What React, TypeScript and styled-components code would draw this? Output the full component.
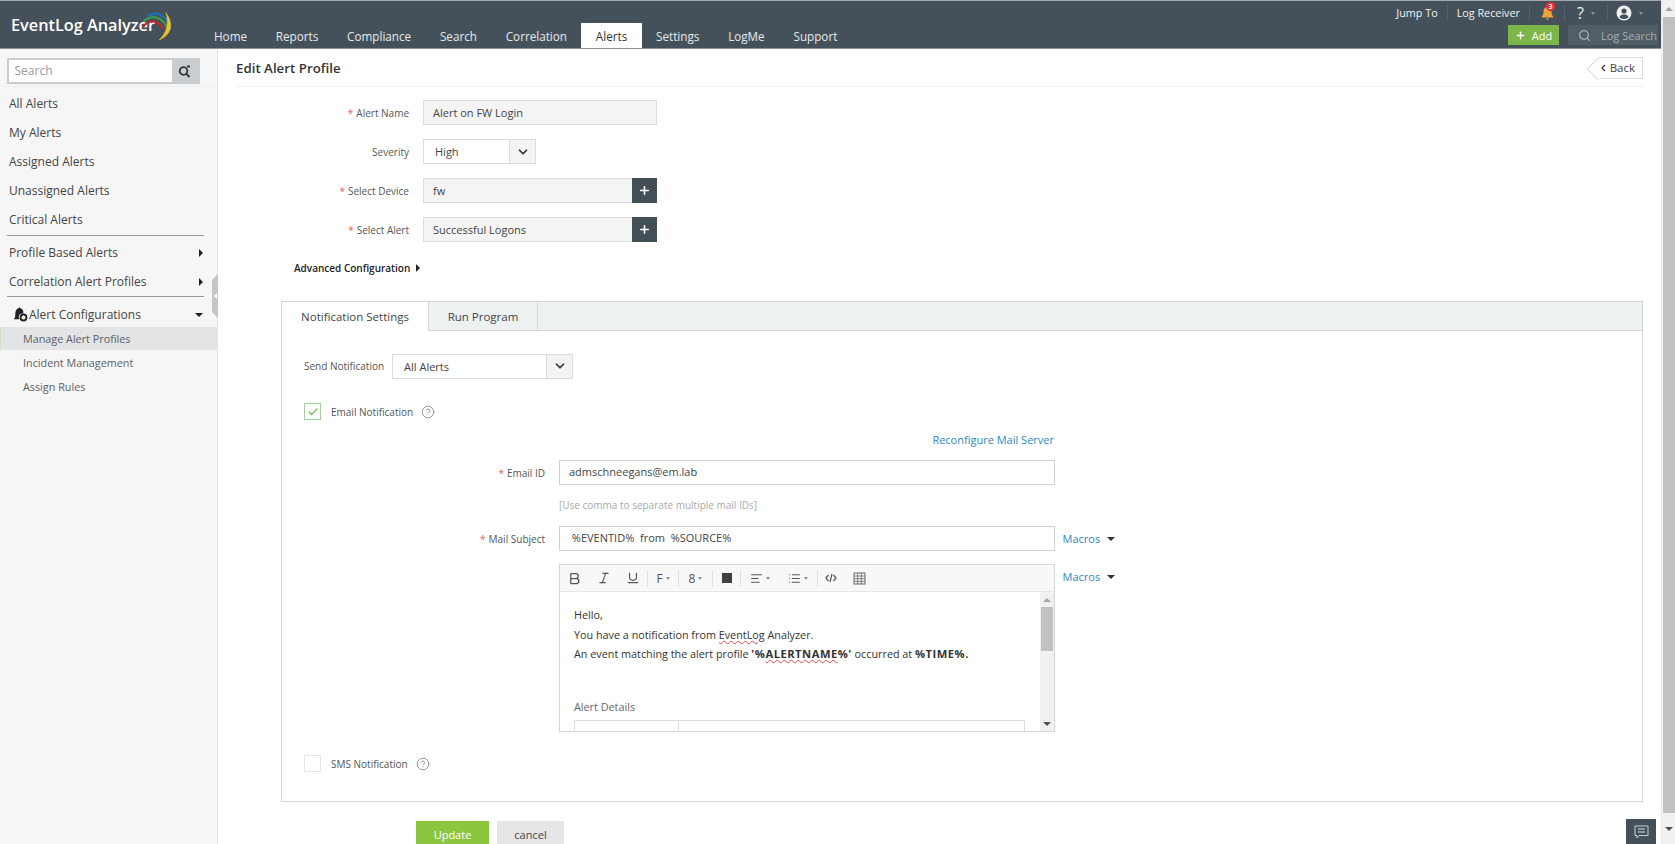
import React from 'react';
import styled, { createGlobalStyle } from 'styled-components';
import { ChevronDown, ChevronLeft, Plus, Check, CircleHelp, Bold, Italic, Underline, AlignLeft, List, Search as SearchIcon } from 'lucide-react';

const Global = createGlobalStyle`
  html, body { margin: 0; height: 844px; overflow: hidden; background: #fff; }
  body { font-family: "Open Sans", "Liberation Sans", sans-serif; color: #444; }
  * { box-sizing: border-box; }
`;

const Page = styled.div`display: flex; width: 1675px; height: 844px; overflow: hidden; position: relative;`;
const Content = styled.div`flex: 1; min-width: 0; display: flex; flex-direction: column;`;

const Scrollbar = styled.aside`width: 14px; background: #f1f1f1; display: flex; flex-direction: column; align-items: center; border-left: 1px solid #e8e8e8;`;
const ScrollArrow = styled.div<{ $up?: boolean; $h: number }>`
  height: ${p => p.$h}px; display: flex; align-items: center; justify-content: center; flex: none;
  &::after { content: ''; border-left: 4px solid transparent; border-right: 4px solid transparent;
    ${p => (p.$up ? 'border-bottom: 4px solid #a5a5a5;' : 'border-top: 4px solid #505050;')} }
`;
const ScrollThumb = styled.div`flex: 1; width: 12px; background: #c1c1c1;`;

const Header = styled.header`
  height: 49px; flex: none; display: flex; background: #45515a;
  border-top: 1px solid #a3a8ab; border-bottom: 1px solid #8b9298;
`;
const Logo = styled.div`
  width: 199.6px; flex: none; position: relative; padding: 12px 0 0 11px;
  font-size: 16.3px; font-weight: 600; line-height: 24px; color: #fff;
`;
const LogoArcs = styled.svg`position: absolute; left: 140px; top: 8px;`;
const Nav = styled.nav`display: flex; align-items: flex-end;`;
const NavItem = styled.a<{ $active?: boolean }>`
  height: 25px; padding: 0 14.4px; display: flex; align-items: center; font-size: 11.7px;
  color: ${p => (p.$active ? '#333' : '#e6e9eb')}; background: ${p => (p.$active ? '#fff' : 'transparent')};
`;
const HeaderRight = styled.div`margin-left: auto; display: flex; flex-direction: column; align-items: flex-end; padding-right: 3px;`;
const TopRow = styled.div`height: 24px; display: flex; align-items: center; padding-right: 8px;`;
const TopLink = styled.span`font-size: 10.8px; color: #f0f2f3; padding: 0 9px; line-height: 16px; border-right: 1px solid #56626a;`;
const IconCell = styled.span<{ $w: number }>`
  width: ${p => p.$w}px; height: 16px; display: flex; align-items: center; justify-content: center; gap: 7px;
  border-right: 1px solid #56626a; color: #eef0f1; font-size: 16px; position: relative;
  &:last-child { border-right: 0; }
`;
const Badge = styled.span`
  position: absolute; top: -3px; left: 16px; width: 9px; height: 9px; border-radius: 50%; background: #ee2a33; color: #fff;
  font-size: 7px; line-height: 9px; text-align: center; font-weight: 700;
`;
const MiniCaret = styled.span`width: 0; height: 0; border-left: 2.5px solid transparent; border-right: 2.5px solid transparent; border-top: 3px solid #89949b;`;
const ActionRow = styled.div`display: flex; gap: 9px;`;
const AddButton = styled.div`
  width: 51px; height: 20px; background: #7cb649; color: #fff; font-size: 11px; font-weight: 500;
  display: flex; align-items: center; justify-content: center; gap: 6px;
`;
const LogSearch = styled.div`
  width: 90px; height: 20px; background: #525e66; color: #a3adb3; font-size: 11px; white-space: nowrap;
  display: flex; align-items: center; padding-left: 10px; gap: 10px;
`;

const Body = styled.div`flex: 1; min-height: 0; display: flex;`;

const Sidebar = styled.div`width: 218px; flex: none; background: #f6f6f6; border-right: 1px solid #e3e4e5; position: relative;`;
const SideSearchArea = styled.div`height: 38px; padding: 9px 0 0 6.5px; border-bottom: 1px solid #eee;`;
const SideSearch = styled.div`width: 193px; height: 26px; display: flex; border: 2px solid #c9cdd0; background: #fff;`;
const SideSearchText = styled.span`flex: 1; font-size: 12px; color: #9a9a9a; line-height: 22px; padding-left: 6px;`;
const SideSearchBtn = styled.span`width: 26px; background: #c9cdd0; display: flex; align-items: center; justify-content: center;`;
const SideList = styled.div`padding-top: 2px;`;
const SideItem = styled.div`
  height: 29px; display: flex; align-items: center; justify-content: space-between; padding: 0 14px 0 9px;
  font-size: 12px; font-weight: 500; color: #444;
`;
const SideGroup = styled(SideItem)`height: 25px;`;
const SideGroupLabel = styled.span`display: flex; align-items: center; gap: 1px; margin-left: 4px;`;
const SideSub = styled.div<{ $active?: boolean }>`
  height: 24px; display: flex; align-items: center; padding-left: 23px; font-size: 10.8px; color: #5c6066;
  ${p => p.$active && 'height: 23px; background: #e3e4e5; border-left: 1px solid #cfe0c4; padding-left: 22px;'}
`;
const SideRule = styled.div<{ $top?: number; $bottom?: number }>`
  height: 1px; background: #9a9a9a; margin: ${p => p.$top ?? 0}px 13px ${p => p.$bottom ?? 2}px 6.5px;
`;
const CaretRight = styled.span`width: 0; height: 0; border-top: 4px solid transparent; border-bottom: 4px solid transparent; border-left: 4px solid #222;`;
const CaretDown = styled.span<{ $c?: string }>`width: 0; height: 0; border-left: 4px solid transparent; border-right: 4px solid transparent; border-top: 4px solid ${p => p.$c || '#222'};`;
const Splitter = styled.div`
  position: absolute; right: -1px; top: 225px; width: 6px; height: 44px; background: #c3c6c8;
  clip-path: polygon(0 6px, 100% 0, 100% 100%, 0 calc(100% - 6px)); display: flex; align-items: center; justify-content: center;
  &::after { content: ''; border-top: 3px solid transparent; border-bottom: 3px solid transparent; border-right: 3px solid #fff; }
`;

const Main = styled.main`flex: 1; min-width: 0; padding: 0 18px 0 18px;`;
const TitleBar = styled.div`height: 38px; display: flex; align-items: center; justify-content: space-between; border-bottom: 1px solid #eee;`;
const Title = styled.h1`margin: 0; font-size: 13.3px; font-weight: 600; color: #333;`;
const BackButton = styled.div`
  width: 45px; height: 22px; border: 1px solid #ddd; border-left: 0; position: relative; display: flex; align-items: center; justify-content: flex-end;
  padding-right: 7px; gap: 1px; font-size: 11.5px; color: #444; background: #fff;
  &::before { content: ''; position: absolute; left: -8px; top: 3px; width: 15px; height: 15px; background: #fff; border-left: 1px solid #ddd; border-bottom: 1px solid #ddd; transform: rotate(45deg); }
  & > * { position: relative; }
`;
const Form = styled.div`padding-top: 13px; display: flex; flex-direction: column; gap: 14px;`;
const Row = styled.div`display: grid; grid-template-columns: 173px 234px; column-gap: 14px; align-items: center; height: 25px;`;
const Label = styled.label`text-align: right; font-size: 10px; color: #555; white-space: nowrap;`;
const Star = styled.span`color: #e85b5b; margin-right: 3px;`;
const ReadOnly = styled.div`
  height: 25px; border: 1px solid #dcdcdc; background: #f4f4f4; font-size: 11px; color: #444; padding-left: 9px; line-height: 23px; display: flex; justify-content: space-between;
`;
const PlusBtn = styled.span`width: 25px; height: 25px; margin: -1px -1px 0 0; background: #434f57; color: #fff; display: flex; align-items: center; justify-content: center; flex: none;`;
const Select = styled.div<{ $w: number }>`
  width: ${p => p.$w}px; height: 25px; border: 1px solid #dcdcdc; background: #fff; display: flex; font-size: 11px; color: #444;
`;
const SelectValue = styled.span`flex: 1; padding-left: 11px; line-height: 24px;`;
const SelectBtn = styled.span`width: 26px; background: #f4f4f4; border-left: 1px solid #dcdcdc; display: flex; align-items: center; justify-content: center; color: #333;`;
const AdvRow = styled.div`margin: 17px 0 0 58px; width: 130px; height: 18px; display: flex; align-items: center; gap: 6px; font-size: 10px; font-weight: 600; color: #222; white-space: nowrap;`;

const Panel = styled.section`margin: 24px 0 0 45px; width: 1362px; height: 501px; border: 1px solid #d6d6d6; position: relative;`;
const TabBar = styled.div`height: 29px; background: #eef1f1; border-bottom: 1px solid #d6d6d6; display: flex;`;
const Tab = styled.div<{ $w: number; $active?: boolean }>`
  width: ${p => p.$w}px; height: ${p => (p.$active ? 29 : 28)}px; display: flex; align-items: center; justify-content: center; font-size: 11.5px; color: #444;
  border-right: 1px solid #d6d6d6; background: ${p => (p.$active ? '#fff' : 'transparent')};
`;
const PanelBody = styled.div`padding: 22px 0 0 22px;`;
const SendRow = styled.div`display: flex; align-items: center; gap: 8px; height: 26px;`;
const SmallLabel = styled.span`font-size: 10px; color: #555;`;
const CheckRow = styled.div<{ $top: number }>`display: flex; align-items: center; height: 17px; margin-top: ${p => p.$top}px;`;
const CheckBox = styled.span<{ $on?: boolean }>`
  width: 17px; height: 17px; flex: none; border: 1px solid ${p => (p.$on ? '#9fd09a' : '#e6e6e6')}; display: flex; align-items: center; justify-content: center; color: #6dbb5c; margin-right: 10px;
`;
const HelpMark = styled.span`display: flex; margin-left: 8px; color: #777;`;
const LinkRow = styled.div`width: 750px; margin-top: 13px; height: 14px; text-align: right; font-size: 11px; line-height: 14px; color: #2d8ac2;`;
const EmailGrid = styled.div`display: grid; grid-template-columns: 241px 495.5px auto; column-gap: 14px; align-items: center; margin-top: 13px; justify-content: start;`;
const TextInput = styled.div`height: 25px; border: 1px solid #d2d2d2; font-size: 11px; color: #444; padding-left: 9px; line-height: 22px; background: #fff; white-space: pre;`;
const Hint = styled.div`grid-column: 2; font-size: 10px; color: #a9a9a9; height: 16px; line-height: 16px; margin: 12px 0 13px;`;
const MacroLink = styled.span`font-size: 11px; color: #2d8ac2; display: flex; align-items: center; gap: 7px; margin-left: -6px;`;
const EditorMacro = styled(MacroLink)`margin-top: 5px;`;
const EditorRow = styled.div`display: grid; grid-template-columns: 495.5px auto; column-gap: 14px; margin: 13px 0 0 255px; align-items: start; justify-content: start;`;
const Editor = styled.div`height: 168px; border: 1px solid #d6d6d6; display: flex; flex-direction: column; overflow: hidden;`;
const Toolbar = styled.div`height: 27px; flex: none; background: #f8f8f8; border-bottom: 1px solid #e6e6e6; display: flex; align-items: center; padding-left: 4px; color: #555;`;
const ToolSep = styled.span<{ $left?: number }>`width: 1px; height: 17px; background: #e0e0e0; flex: none; margin-left: ${p => p.$left ?? 0}px;`;
const Tool = styled.span<{ $w: number }>`width: ${p => p.$w}px; flex: none; display: flex; align-items: center; justify-content: center; gap: 3px; font-size: 12px; font-weight: 500; color: #555;`;
const ColorSquare = styled.span`width: 10px; height: 10px; background: #404040;`;
const EditorBody = styled.div`flex: 1; min-height: 0; display: flex;`;
const EditorText = styled.div`
  flex: 1; padding: 13px 0 0 14px; font-size: 10.8px; line-height: 19.7px; color: #333; overflow: hidden; white-space: nowrap;
  b { font-size: 11.2px; letter-spacing: 0.5px; }
`;
const Squiggle = styled.span`text-decoration: underline wavy #e5484d 1px;`;
const EditorGap = styled.div`height: 33px;`;
const MutedLine = styled.div`color: #666;`;
const MiniTable = styled.div`margin-top: 3px; width: 451px; height: 30px; border: 1px solid #ddd; display: grid; grid-template-columns: 104px 1fr;`;
const MiniCell = styled.div`border-right: 1px solid #ddd;`;
const EditorScroll = styled.div`width: 14px; flex: none; background: #f1f1f1; display: flex; flex-direction: column; align-items: center;`;
const EditorThumb = styled.div`width: 12px; height: 44px; background: #c1c1c1; flex: none;`;
const EditorTrack = styled.div`flex: 1;`;
const ButtonRow = styled.div`margin: 19px 0 0 180px; display: flex; gap: 8px;`;
const FormButton = styled.div<{ $primary?: boolean }>`
  height: 28px; width: ${p => (p.$primary ? 73 : 67)}px; background: ${p => (p.$primary ? '#8cc63f' : '#e6e6e6')};
  color: ${p => (p.$primary ? '#fff' : '#444')}; font-size: 11px; display: flex; align-items: center; justify-content: center; padding-bottom: 2px;
`;
const ChatButton = styled.div`position: absolute; left: 1626px; top: 819px; width: 30px; height: 25px; background: #45515a; display: flex; align-items: center; justify-content: center;`;

const BellGear = () => (
  <svg width="15" height="15" viewBox="0 0 15 15" fill="#222">
    <path d="M5.5 1.2c.5-.8 1.5-.8 2 0 1.8.5 2.8 2 2.8 3.8v1.5H9a3.4 3.4 0 0 0-2.4 5.7H1c0-.8.7-1.1 1-2 .5-1.5.2-3.5.5-5.2.2-1.7 1.3-3.2 3-3.8z" />
    <circle cx="10.5" cy="10.5" r="3" fill="none" stroke="#222" strokeWidth="1.8" />
  </svg>
);

const UserIcon = () => (
  <svg width="16" height="16" viewBox="0 0 16 16">
    <circle cx="8" cy="8" r="7.5" fill="#eef0f1" />
    <circle cx="8" cy="6" r="2.6" fill="#45515a" />
    <path d="M3.5 12.2C4.3 10 6 9.5 8 9.5s3.7.5 4.5 2.7C11.3 13.4 9.7 14 8 14s-3.3-.6-4.5-1.8z" fill="#45515a" />
  </svg>
);

const GridIcon = () => (
  <svg width="13" height="13" viewBox="0 0 13 13" fill="none" stroke="#666" strokeWidth="1">
    <rect x="1" y="1" width="11" height="11" />
    <path d="M1 4h11M1 6.7h11M1 9.4h11M4.7 1v11M8.3 1v11" strokeWidth="0.8" />
  </svg>
);

const Q = () => <Star>*</Star>;

export default function App() {
  return (
    <Page>
      <Global />
      <Content>
        <Header>
          <Logo>
            EventLog Analyzer
            <LogoArcs width="36" height="36" viewBox="0 0 36 36" fill="none" strokeLinecap="round">
              <path d="M3 18C8 11 17 10 23 19" stroke="#c2272d" strokeWidth="2.2" />
              <path d="M4 12C12 5 23 8 27 19" stroke="#3b9a4b" strokeWidth="2.2" />
              <path d="M8 7C18 1 28 8 30 20" stroke="#1f6fb5" strokeWidth="2.2" />
              <path d="M26 4C34 14 32 26 19 31C27 24 29 14 26 4Z" fill="#e9c22e" stroke="#e9c22e" strokeWidth="0.5" />
            </LogoArcs>
          </Logo>
          <Nav>
            <NavItem>Home</NavItem>
            <NavItem>Reports</NavItem>
            <NavItem>Compliance</NavItem>
            <NavItem>Search</NavItem>
            <NavItem>Correlation</NavItem>
            <NavItem $active>Alerts</NavItem>
            <NavItem>Settings</NavItem>
            <NavItem>LogMe</NavItem>
            <NavItem>Support</NavItem>
          </Nav>
          <HeaderRight>
            <TopRow>
              <TopLink>Jump To</TopLink>
              <TopLink>Log Receiver</TopLink>
              <IconCell $w={35}>
                <svg width="15" height="15" viewBox="0 0 14 15" fill="#e9a53a"><path d="M7 1c3 0 4 2.5 4 5 0 3 1.5 4 2 5.5H1C1.5 10 3 9 3 6c0-2.5 1-5 4-5z" /><path d="M5.5 12.5h3L7 14.5z" /></svg>
                <Badge>3</Badge>
              </IconCell>
              <IconCell $w={43}>?<MiniCaret /></IconCell>
              <IconCell $w={42}><UserIcon /><MiniCaret /></IconCell>
            </TopRow>
            <ActionRow>
              <AddButton><Plus size={11} strokeWidth={3} />Add</AddButton>
              <LogSearch><SearchIcon size={13} strokeWidth={2.5} />Log Search</LogSearch>
            </ActionRow>
          </HeaderRight>
        </Header>
        <Body>
          <Sidebar>
            <SideSearchArea>
              <SideSearch>
                <SideSearchText>Search</SideSearchText>
                <SideSearchBtn>
                  <svg width="13" height="13" viewBox="0 0 13 13" fill="none" stroke="#333" strokeWidth="1.8"><circle cx="5.5" cy="6" r="3.8" /><path d="M8.5 9l3 3M9 1.5h3" /></svg>
                </SideSearchBtn>
              </SideSearch>
            </SideSearchArea>
            <SideList>
              <SideItem>All Alerts</SideItem>
              <SideItem>My Alerts</SideItem>
              <SideItem>Assigned Alerts</SideItem>
              <SideItem>Unassigned Alerts</SideItem>
              <SideItem>Critical Alerts</SideItem>
              <SideRule $top={1} />
              <SideItem>Profile Based Alerts<CaretRight /></SideItem>
              <SideItem>Correlation Alert Profiles<CaretRight /></SideItem>
              <SideRule $bottom={5} />
              <SideGroup><SideGroupLabel><BellGear />Alert Configurations</SideGroupLabel><CaretDown /></SideGroup>
              <SideSub $active>Manage Alert Profiles</SideSub>
              <SideSub>Incident Management</SideSub>
              <SideSub>Assign Rules</SideSub>
            </SideList>
            <Splitter />
          </Sidebar>
          <Main>
            <TitleBar>
              <Title>Edit Alert Profile</Title>
              <BackButton><ChevronLeft size={16} strokeWidth={3} />Back</BackButton>
            </TitleBar>
            <Form>
              <Row><Label><Q />Alert Name</Label><ReadOnly>Alert on FW Login</ReadOnly></Row>
              <Row><Label>Severity</Label><Select $w={113}><SelectValue>High</SelectValue><SelectBtn><ChevronDown size={14} strokeWidth={3} /></SelectBtn></Select></Row>
              <Row><Label><Q />Select Device</Label><ReadOnly>fw<PlusBtn><Plus size={13} strokeWidth={3} /></PlusBtn></ReadOnly></Row>
              <Row><Label><Q />Select Alert</Label><ReadOnly>Successful Logons<PlusBtn><Plus size={13} strokeWidth={3} /></PlusBtn></ReadOnly></Row>
            </Form>
            <AdvRow>Advanced Configuration <CaretRight /></AdvRow>
            <Panel>
              <TabBar>
                <Tab $w={147} $active>Notification Settings</Tab>
                <Tab $w={109}>Run Program</Tab>
              </TabBar>
              <PanelBody>
                <SendRow>
                  <SmallLabel>Send Notification</SmallLabel>
                  <Select $w={181}><SelectValue>All Alerts</SelectValue><SelectBtn><ChevronDown size={14} strokeWidth={3} /></SelectBtn></Select>
                </SendRow>
                <CheckRow $top={24}>
                  <CheckBox $on><Check size={12} strokeWidth={2.5} /></CheckBox>
                  <SmallLabel>Email Notification</SmallLabel>
                  <HelpMark><CircleHelp size={14} strokeWidth={1.3} /></HelpMark>
                </CheckRow>
                <LinkRow>Reconfigure Mail Server</LinkRow>
                <EmailGrid>
                  <Label><Q />Email ID</Label>
                  <TextInput>admschneegans@em.lab</TextInput>
                  <span />
                  <Hint>[Use comma to separate multiple mail IDs]</Hint>
                  <span />
                  <Label><Q />Mail Subject</Label>
                  <TextInput> %EVENTID%  from  %SOURCE%</TextInput>
                  <MacroLink>Macros <CaretDown $c="#333" /></MacroLink>
                </EmailGrid>
                <EditorRow>
                  <Editor>
                    <Toolbar>
                      <Tool $w={20}><Bold size={15} strokeWidth={2} /></Tool>
                      <Tool $w={40}><Italic size={14} strokeWidth={2} /></Tool>
                      <Tool $w={18}><Underline size={14} strokeWidth={2} /></Tool>
                      <ToolSep $left={5} />
                      <Tool $w={30}>F<MiniCaret /></Tool>
                      <ToolSep />
                      <Tool $w={33}>8<MiniCaret /></Tool>
                      <ToolSep />
                      <Tool $w={27}><ColorSquare /></Tool>
                      <ToolSep />
                      <Tool $w={37}><AlignLeft size={13} /><MiniCaret /></Tool>
                      <Tool $w={39}><List size={13} /><MiniCaret /></Tool>
                      <ToolSep />
                      <Tool $w={26}>
                        <svg width="12" height="10" viewBox="0 0 12 10" fill="none" stroke="#555" strokeWidth="1.2"><path d="M3.5 2L1 5l2.5 3M8.5 2L11 5 8.5 8M7 1L5 9" /></svg>
                      </Tool>
                      <Tool $w={30}><GridIcon /></Tool>
                    </Toolbar>
                    <EditorBody>
                      <EditorText>
                        <div>Hello,</div>
                        <div>You have a notification from <Squiggle>EventLog</Squiggle> Analyzer.</div>
                        <div>An event matching the alert profile <b>'%<Squiggle>ALERTNAME</Squiggle>%'</b> occurred at <b>%TIME%.</b></div>
                        <EditorGap />
                        <MutedLine>Alert Details</MutedLine>
                        <MiniTable><MiniCell /></MiniTable>
                      </EditorText>
                      <EditorScroll>
                        <ScrollArrow $up $h={15} />
                        <EditorThumb />
                        <EditorTrack />
                        <ScrollArrow $h={15} />
                      </EditorScroll>
                    </EditorBody>
                  </Editor>
                  <EditorMacro>Macros <CaretDown $c="#333" /></EditorMacro>
                </EditorRow>
                <CheckRow $top={23}>
                  <CheckBox />
                  <SmallLabel>SMS Notification</SmallLabel>
                  <HelpMark><CircleHelp size={14} strokeWidth={1.3} /></HelpMark>
                </CheckRow>
              </PanelBody>
            </Panel>
            <ButtonRow>
              <FormButton $primary>Update</FormButton>
              <FormButton>cancel</FormButton>
            </ButtonRow>
          </Main>
        </Body>
      </Content>
      <Scrollbar>
        <ScrollArrow $up $h={17} />
        <ScrollThumb />
        <ScrollArrow $h={31} />
      </Scrollbar>
      <ChatButton>
        <svg width="15" height="14" viewBox="0 0 15 14" fill="none" stroke="#c9ced1" strokeWidth="1"><path d="M1 1h13v9.5H5L3 13v-2.5H1z" /><path d="M4 4h7M4 7h7" strokeWidth="2" stroke="#8f989e" /></svg>
      </ChatButton>
    </Page>
  );
}
